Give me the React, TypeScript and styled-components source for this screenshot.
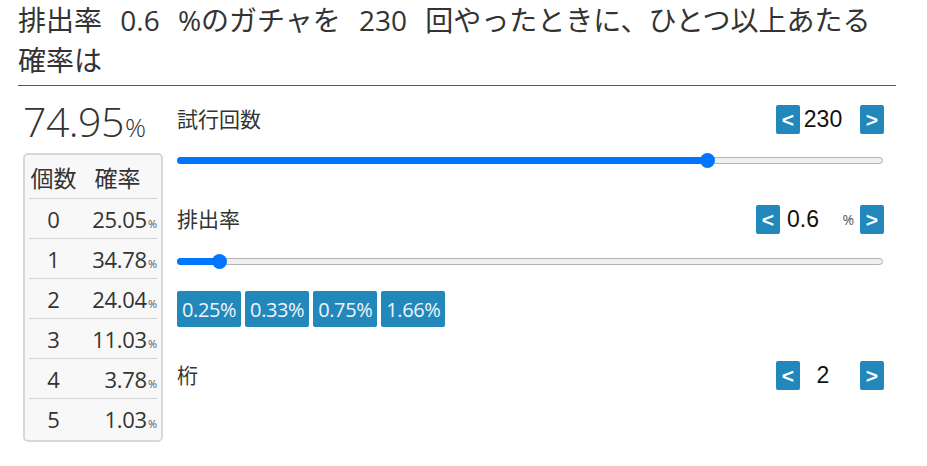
import React from "react";
import styled, { createGlobalStyle } from "styled-components";

const Global = createGlobalStyle`
  html, body { margin: 0; padding: 0; background: #fff; }
  body {
    font-family: "Open Sans", "Noto Sans CJK JP", sans-serif;
    color: #333;
  }
`;

const Page = styled.div`
  width: 878px;
  padding: 0 31px 0 18px;
`;

const Title = styled.h1`
  margin: 0;
  padding: 0 0 5px;
  font-size: 28px;
  font-weight: 400;
  line-height: 40px;
  word-spacing: 11px;
  border-bottom: 1px solid #555;
`;

const Main = styled.div`
  display: flex;
  gap: 14px;
  margin-left: 5px;
  padding-top: 12px;
`;

const LeftCol = styled.div`
  width: 140px;
  display: flex;
  flex-direction: column;
`;

const Big = styled.div`
  font-size: 41px;
  font-weight: 300;
  line-height: 46px;
  height: 46px;
  white-space: nowrap;
  letter-spacing: -0.5px;
`;

const BigUnit = styled.span`
  font-size: 26px;
  margin-left: 1px;
`;

const TableBox = styled.div`
  margin-top: 9px;
  border: 2px solid #d8d8d8;
  border-radius: 5px;
  background: #f8f8f8;
  padding: 0 4px 2px;
`;

const Table = styled.table`
  width: 100%;
  border-collapse: collapse;
`;

const Th = styled.th<{ $w?: number }>`
  font-weight: 400;
  font-size: 23px;
  height: 43px;
  padding: 0;
  text-align: center;
  border-bottom: 1px solid #d4d4d4;
  ${(p) => (p.$w ? `width: ${p.$w}px;` : "")}
`;

const Tr = styled.tr`
  &:not(:last-child) td { border-bottom: 1px solid #d4d4d4; }
`;

const Td = styled.td<{ $align: "center" | "right" }>`
  font-size: 22px;
  font-weight: 400;
  height: 39px;
  padding: 0;
  text-align: ${(p) => p.$align};
  white-space: nowrap;
  letter-spacing: -0.3px;
`;

const SmallPct = styled.span`
  font-size: 11px;
  color: #555;
  margin-left: 1px;
  letter-spacing: 0;
`;

const RightCol = styled.div`
  width: 706px;
  display: flex;
  flex-direction: column;
  padding-top: 7px;
`;

const Section = styled.div<{ $mt: number }>`
  margin-top: ${(p) => p.$mt}px;
  display: flex;
  flex-direction: column;
`;

const LabelRow = styled.div`
  display: flex;
  align-items: center;
  justify-content: space-between;
  height: 29px;
`;

const Label = styled.div`
  font-size: 21px;
  line-height: 29px;
`;

const Stepper = styled.div`
  display: flex;
  align-items: center;
  margin-right: -1px;
`;

const StepBtn = styled.button`
  width: 24px;
  height: 29px;
  padding: 0;
  border: none;
  border-radius: 2px;
  background: #2288bb;
  color: #fff;
  font-family: "Liberation Sans", Arial, sans-serif;
  font-weight: 700;
  font-size: 21px;
  line-height: 29px;
  cursor: pointer;
`;

const Value = styled.div`
  width: 46px;
  text-align: center;
  font-family: "Liberation Sans", Arial, sans-serif;
  font-size: 23px;
  color: #111;
`;

const Unit = styled.div<{ $w: number }>`
  width: ${(p) => p.$w}px;
  font-size: 14px;
  color: #555;
  text-align: right;
  padding-right: 6px;
  box-sizing: border-box;
`;

const SliderWrap = styled.div<{ $mt: number }>`
  position: relative;
  height: 16px;
  margin-top: ${(p) => p.$mt}px;
  display: flex;
  align-items: center;
`;

const Track = styled.div`
  position: relative;
  flex: 1;
  height: 7px;
  box-sizing: border-box;
  background: #efefef;
  border: 1px solid #b2b2b2;
  border-radius: 4px;
`;

const Fill = styled.div`
  position: absolute;
  left: -1px;
  top: -1px;
  height: 7px;
  background: #0075ff;
  border-radius: 4px 0 0 4px;
`;

const Thumb = styled.div`
  position: absolute;
  top: 50%;
  width: 15px;
  height: 15px;
  margin-left: -7.5px;
  margin-top: -7.5px;
  border-radius: 50%;
  background: #0075ff;
`;

const Presets = styled.div`
  display: flex;
  gap: 4px;
  margin-top: 22px;
`;

const Preset = styled.button`
  height: 36px;
  padding: 0 5px;
  border: none;
  border-radius: 2px;
  background: #2288bb;
  color: #eef6fb;
  font-family: "Open Sans", "Noto Sans CJK JP", sans-serif;
  font-weight: 400;
  font-size: 20px;
  letter-spacing: -0.4px;
  cursor: pointer;
`;

const Slider: React.FC<{ value: number; min: number; max: number; mt: number }> = ({
  value,
  min,
  max,
  mt,
}) => {
  const W = 706;
  const frac = (value - min) / (max - min);
  const x = 7.5 + frac * (W - 15);
  return (
    <SliderWrap $mt={mt}>
      <Track>
        <Fill style={{ width: x }} />
      </Track>
      <Thumb style={{ left: x }} />
    </SliderWrap>
  );
};

const rows: [number, string][] = [
  [0, "25.05"],
  [1, "34.78"],
  [2, "24.04"],
  [3, "11.03"],
  [4, "3.78"],
  [5, "1.03"],
];

export default function App() {
  return (
    <Page>
      <Global />
      <Title>排出率 0.6 %のガチャを 230 回やったときに、ひとつ以上あたる確率は</Title>
      <Main>
        <LeftCol>
          <Big>
            74.95<BigUnit>%</BigUnit>
          </Big>
          <TableBox>
            <Table>
              <thead>
                <tr>
                  <Th $w={49}>個数</Th>
                  <Th>確率</Th>
                </tr>
              </thead>
              <tbody>
                {rows.map(([n, p]) => (
                  <Tr key={n}>
                    <Td $align="center">{n}</Td>
                    <Td $align="right">
                      {p}
                      <SmallPct>%</SmallPct>
                    </Td>
                  </Tr>
                ))}
              </tbody>
            </Table>
          </TableBox>
        </LeftCol>
        <RightCol>
          <Section $mt={0}>
            <LabelRow>
              <Label>試行回数</Label>
              <Stepper>
                <StepBtn>&lt;</StepBtn>
                <Value>230</Value>
                <Unit $w={14} />
                <StepBtn>&gt;</StepBtn>
              </Stepper>
            </LabelRow>
            <Slider value={230} min={0} max={304} mt={18} />
          </Section>
          <Section $mt={37}>
            <LabelRow>
              <Label>排出率</Label>
              <Stepper>
                <StepBtn>&lt;</StepBtn>
                <Value>0.6</Value>
                <Unit $w={34}>%</Unit>
                <StepBtn>&gt;</StepBtn>
              </Stepper>
            </LabelRow>
            <Slider value={0.6} min={0} max={12} mt={19} />
            <Presets>
              <Preset>0.25%</Preset>
              <Preset>0.33%</Preset>
              <Preset>0.75%</Preset>
              <Preset>1.66%</Preset>
            </Presets>
          </Section>
          <Section $mt={34}>
            <LabelRow>
              <Label>桁</Label>
              <Stepper>
                <StepBtn>&lt;</StepBtn>
                <Value>2</Value>
                <Unit $w={14} />
                <StepBtn>&gt;</StepBtn>
              </Stepper>
            </LabelRow>
          </Section>
        </RightCol>
      </Main>
    </Page>
  );
}
